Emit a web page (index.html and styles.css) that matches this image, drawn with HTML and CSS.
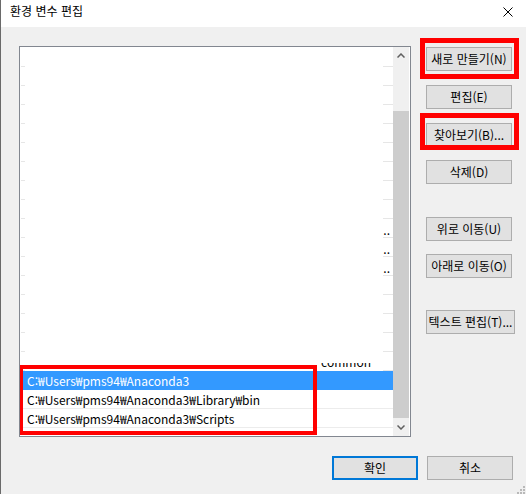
FILE: index.html
```html
<!DOCTYPE html>
<html lang="ko">
<head>
<meta charset="utf-8">
<title>환경 변수 편집</title>
<link rel="stylesheet" href="styles.css">
</head>
<body>
<div class="window">
  <div class="titlebar">
    <span class="title">환경 변수 편집</span>
    <svg class="close" width="10" height="10" viewBox="0 0 10 10"><path d="M0.5 0.5 L9.5 9.5 M9.5 0.5 L0.5 9.5" stroke="#000" stroke-width="1" fill="none"/></svg>
  </div>
  <div class="body">
    <div class="main">
      <div class="listbox">
        <div class="rows">
          <div class="row blank"></div>
          <div class="row blank"></div>
          <div class="row blank"></div>
          <div class="row blank"></div>
          <div class="row blank"></div>
          <div class="row blank"></div>
          <div class="row blank"></div>
          <div class="row blank"></div>
          <div class="row blank"></div>
          <div class="row blank"><span class="tail">..</span></div>
          <div class="row blank"><span class="tail">..</span></div>
          <div class="row blank"><span class="tail">..</span></div>
          <div class="row blank"></div>
          <div class="row blank"></div>
          <div class="row blank"></div>
          <div class="row blank"></div>
          <div class="row blank"><span class="frag">common</span></div>
          <div class="row path selected">C:₩Users₩pms94₩Anaconda3</div>
          <div class="row path">C:₩Users₩pms94₩Anaconda3₩Library₩bin</div>
          <div class="row path">C:₩Users₩pms94₩Anaconda3₩Scripts</div>
          <div class="row path"></div>
        </div>
        <div class="scrollbar">
          <div class="sb-arrow"><svg width="8" height="5" viewBox="0 0 8 5"><path d="M0.5 4.5 L4 1 L7.5 4.5" stroke="#606060" stroke-width="1.5" fill="none"/></svg></div>
          <div class="sb-track"><div class="sb-thumb"></div></div>
          <div class="sb-arrow"><svg width="8" height="5" viewBox="0 0 8 5"><path d="M0.5 0.5 L4 4 L7.5 0.5" stroke="#606060" stroke-width="1.5" fill="none"/></svg></div>
        </div>
        <div class="mark-list"></div>
      </div>
      <div class="actions">
        <div class="marked mark-a"><button class="btn">새로 만들기(N)</button></div>
        <button class="btn gap14">편집(E)</button>
        <div class="marked mark-b gap14"><button class="btn">찾아보기(B)...</button></div>
        <button class="btn gap13">삭제(D)</button>
        <button class="btn gap33">위로 이동(U)</button>
        <button class="btn gap13">아래로 이동(O)</button>
        <button class="btn wide gap32">텍스트 편집(T)...</button>
      </div>
    </div>
    <div class="footer">
      <button class="btn default">확인</button>
      <button class="btn">취소</button>
    </div>
  </div>
  <svg class="grip" width="9" height="8" viewBox="0 0 9 8">
    <rect x="7" y="0" width="2" height="2" fill="#b9b9b9"/>
    <rect x="4" y="3" width="2" height="2" fill="#b9b9b9"/>
    <rect x="7" y="3" width="2" height="2" fill="#b9b9b9"/>
    <rect x="1" y="6" width="2" height="2" fill="#b9b9b9"/>
    <rect x="4" y="6" width="2" height="2" fill="#b9b9b9"/>
    <rect x="7" y="6" width="2" height="2" fill="#b9b9b9"/>
  </svg>
</div>
</body>
</html>
```

FILE: styles.css
```css
* { box-sizing: border-box; }
html, body { margin: 0; padding: 0; }
body {
  font-family: "Noto Sans CJK KR", sans-serif;
  font-size: 12px;
  color: #000;
  background: #f0f0f0;
}
.window {
  position: relative;
  width: 526px;
  height: 494px;
  background: #f0f0f0;
  border-left: 1px solid #6a6a6a;
  overflow: hidden;
}
.titlebar {
  height: 27px;
  background: #fff;
  display: flex;
  align-items: flex-start;
  padding-left: 9px;
}
.title {
  line-height: 16px;
  margin-top: 3px;
}
.close {
  margin-left: auto;
  margin-right: 13px;
  margin-top: 7px;
}
.main {
  display: flex;
  align-items: flex-start;
  padding: 19px 0 0 18px;
}
.listbox {
  position: relative;
  width: 392px;
  height: 391px;
  border: 1px solid #828790;
  background: #fff;
  display: flex;
  overflow: hidden;
}
.rows {
  width: 373px;
  padding-top: 1px;
  display: flex;
  flex-direction: column;
}
.row {
  flex: none;
  height: 19px;
  display: flex;
  align-items: center;
  white-space: nowrap;
  line-height: 18px;
}
.row.blank {
  background:
    linear-gradient(#e6e6e6, #e6e6e6) left 1px bottom / 4px 1px no-repeat,
    linear-gradient(#e6e6e6, #e6e6e6) right 0 bottom / 10px 1px no-repeat;
}
.row.path {
  border-bottom: 1px solid #ececec;
  padding-left: 7px;
  padding-top: 1px;
}
.row.selected {
  background: #3399ff;
  color: #fff;
  border-bottom-color: #3399ff;
}
.tail {
  margin-left: auto;
  margin-right: 3px;
  padding-top: 2px;
}
/* only the lower edge of this item's text shows in the reference */
.frag {
  display: flex;
  align-items: flex-end;
  align-self: flex-end;
  height: 5px;
  margin: 0 22px 3px auto;
  overflow: hidden;
  line-height: 12px;
}
.scrollbar {
  width: 16px;
  background: #f0f0f0;
  display: flex;
  flex-direction: column;
}
.sb-arrow {
  height: 17px;
  flex: none;
  display: flex;
  align-items: center;
  justify-content: center;
}
.sb-track {
  flex: 1;
  padding-top: 47px;
}
.sb-thumb {
  height: 307px;
  background: #cdcdcd;
}
.mark-list {
  position: absolute;
  left: -1px;
  top: 318px;
  width: 298px;
  height: 70px;
  border: 4px solid #ff0000;
}
.actions {
  display: flex;
  flex-direction: column;
  align-items: flex-start;
  margin-left: 15px;
  padding-top: 1px;
}
.btn {
  width: 86px;
  height: 24px;
  border: 1px solid #adadad;
  background: #e1e1e1;
  font-family: "Noto Sans CJK KR", sans-serif;
  font-size: 12px;
  color: #000;
  padding: 0;
  line-height: 20px;
  white-space: nowrap;
}
.btn.wide { width: 89px; }
.gap13 { margin-top: 13px; }
.gap14 { margin-top: 14px; }
.gap32 { margin-top: 32px; }
.gap33 { margin-top: 33px; }
.marked {
  position: relative;
  display: flex;
}
.marked::after {
  content: "";
  position: absolute;
  border: 5px solid #ff0000;
}
.mark-a::after { left: -6px; right: -7px; top: -9px; bottom: -8px; }
.mark-b::after { left: -6px; right: -7px; top: -10px; bottom: -3px; }
.footer {
  display: flex;
  justify-content: flex-end;
  gap: 9px;
  padding-right: 13px;
  margin-top: 19px;
}
.btn.default {
  border: 2px solid #0078d7;
}
.grip {
  position: absolute;
  right: 1px;
  bottom: 0;
}
```
